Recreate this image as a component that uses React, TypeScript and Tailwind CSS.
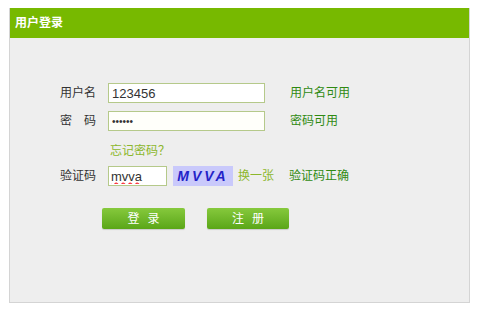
import React from "react";

const font = { fontFamily: '"Liberation Sans", "Noto Sans CJK SC", sans-serif' };

function Row({ label, children }: { label: React.ReactNode; children: React.ReactNode }) {
  return (
    <div className="flex items-center h-[20px]">
      <div className="w-[48px] text-[12px] text-[#333]">{label}</div>
      {children}
    </div>
  );
}

export default function App() {
  return (
    <div className="w-[487px] h-[311px] bg-white pt-[8px] pl-[9px]" style={font}>
      <div className="w-[461px] h-[295px] flex flex-col border border-[#d4d4d4] border-t-0 bg-[#eeeeee]">
        <div className="h-[30px] bg-[#77b900] flex items-center pl-[5px] text-white text-[12px] font-bold">
          用户登录
        </div>
        <div className="flex flex-col pl-[50px] pt-[45px]">
          <Row label="用户名">
            <input
              readOnly
              value="123456"
              className="w-[157px] h-[20px] border border-[#b5c98a] bg-white px-[3px] text-[13px] text-[#333] outline-none"
            />
            <span className="ml-[25px] text-[12px] text-[#2f8a12]">用户名可用</span>
          </Row>
          <div className="h-[8px]" />
          <Row label={<span className="tracking-[12px]">密码</span>}>
            <input
              readOnly
              type="password"
              value="123456"
              className="w-[157px] h-[20px] border border-[#b5c98a] bg-[#fffffa] px-[3px] text-[10px] text-[#333] outline-none"
            />
            <span className="ml-[25px] text-[12px] text-[#2f8a12]">密码可用</span>
          </Row>
          <div className="pl-[50px] mt-[11px] h-[16px] text-[12px] text-[#8cb72c]">忘记密码？</div>
          <div className="h-[8px]" />
          <Row label="验证码">
            <input
              readOnly
              value="mvva"
              className="w-[59px] h-[20px] border border-[#b5c98a] bg-white px-[2px] text-[13px] text-[#333] outline-none underline decoration-wavy decoration-red-500"
            />
            <div className="ml-[6px] w-[60px] h-[20px] bg-[#c9c9fb] flex items-center justify-center text-[14px] font-bold italic tracking-[3px] text-[#2323c8]">
              MVVA
            </div>
            <span className="ml-[5px] text-[12px] text-[#8cb72c]">换一张</span>
            <span className="ml-[15px] text-[12px] text-[#2f8a12]">验证码正确</span>
          </Row>
          <div className="flex mt-[22px] pl-[42px] gap-[22px]">
            <button className="w-[83px] h-[21px] rounded-[2px] bg-gradient-to-b from-[#86c93c] to-[#5aa616] text-white text-[12px] tracking-[8px] pl-[8px] shadow-[0_1px_1px_rgba(0,0,0,0.15)]">
              登录
            </button>
            <button className="w-[82px] h-[21px] rounded-[2px] bg-gradient-to-b from-[#86c93c] to-[#5aa616] text-white text-[12px] tracking-[8px] pl-[8px] shadow-[0_1px_1px_rgba(0,0,0,0.15)]">
              注册
            </button>
          </div>
        </div>
      </div>
    </div>
  );
}
